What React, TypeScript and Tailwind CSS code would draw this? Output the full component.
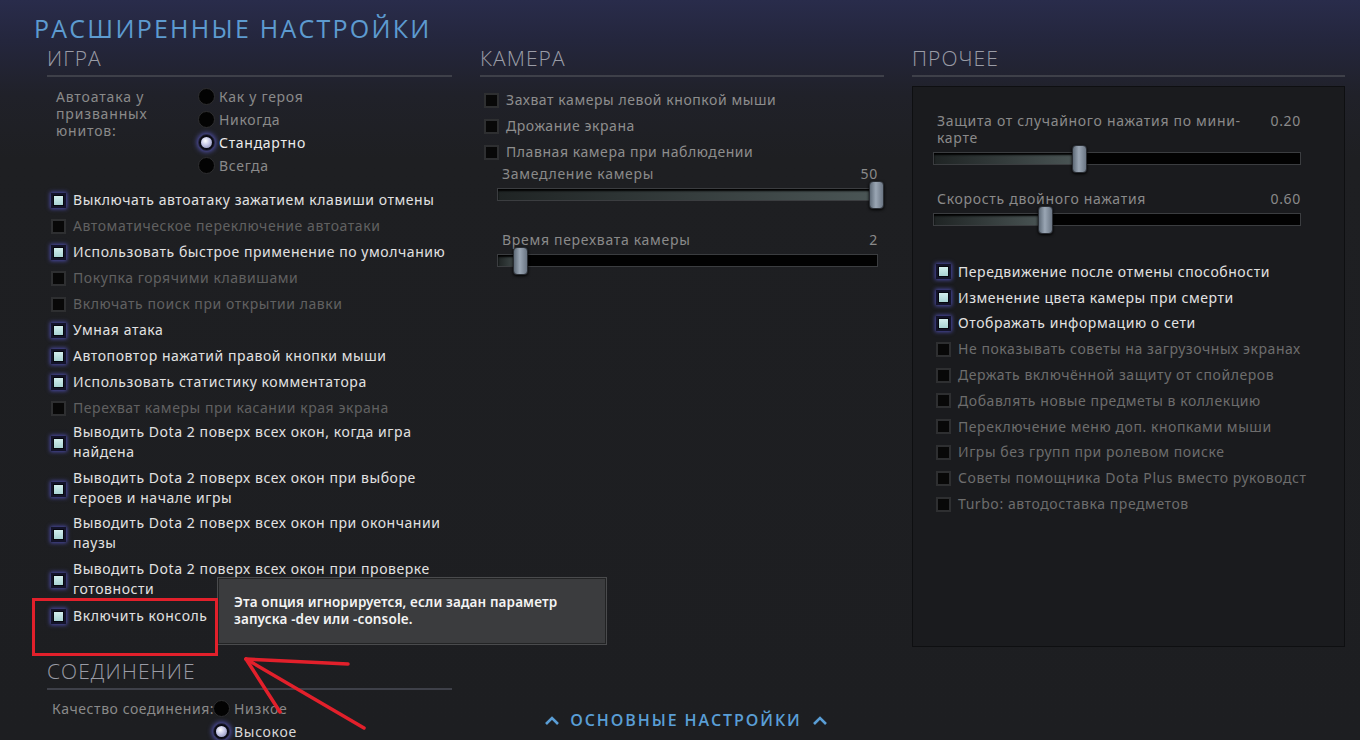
import React from 'react';

const FONT = "font-['Noto_Sans','Open_Sans',sans-serif]";

function Check({ on }: { on?: boolean }) {
  if (on) {
    return (
      <span className="shrink-0 w-[15px] h-[15px] bg-[#07070f] border-[2px] border-[#14142a] shadow-[0_0_4px_1px_#4b4ba6] flex items-center justify-center">
        <span className="w-[9px] h-[9px] bg-[linear-gradient(180deg,#d3eeee,#a9d3d4)]" />
      </span>
    );
  }
  return <span className="shrink-0 w-[15px] h-[15px] bg-[#080808] border-[2px] border-[#2e2f31]" />;
}

function Radio({ on }: { on?: boolean }) {
  if (on) {
    return (
      <span className="shrink-0 w-[17px] h-[17px] rounded-full bg-[#0a0a14] border border-[#2a2a44] shadow-[0_0_5px_1px_#5656b8] flex items-center justify-center">
        <span className="w-[11px] h-[11px] rounded-full bg-[radial-gradient(circle_at_40%_35%,#ffffff,#c4c6e6_45%,#7c80a8)]" />
      </span>
    );
  }
  return <span className="shrink-0 w-[17px] h-[17px] rounded-full bg-[#030303] border border-[#2e2e30]" />;
}

type Row = { label: string; on?: boolean; tone?: 'off' | 'mid' | 'dim' };

function CheckRow({ label, on, tone, h = 'h-[26px]' }: Row & { h?: string }) {
  const color = on
    ? 'text-[#e2e2e2]'
    : tone === 'dim'
      ? 'text-[#8e8e8e]'
      : tone === 'mid'
        ? 'text-[#6d6d6d]'
        : 'text-[#616161]';
  return (
    <div className={`flex items-center gap-[7px] ${h}`}>
      <Check on={on} />
      <span className={`${color} text-[14px] tracking-[0.04em] leading-[20px] whitespace-nowrap`}>{label}</span>
    </div>
  );
}

function Header({ children }: { children: React.ReactNode }) {
  return (
    <div className="border-b-[2px] border-[#3e4049] pb-[4px]">
      <div className="font-['Open_Sans',sans-serif] font-light text-[21px] leading-[26px] tracking-[0.05em] text-[#9a9ca6]">{children}</div>
    </div>
  );
}

function Slider({ label, value, pct, labelClass }: { label: string; value: string; pct: number; labelClass?: string }) {
  return (
    <div>
      <div className="flex items-start justify-between">
        <span className={`text-[14px] tracking-[0.05em] leading-[17px] text-[#8a8a8a] ${labelClass ?? ''}`}>{label}</span>
        <span className="text-[14px] tracking-[0.05em] leading-[17px] text-[#8a8a8a]">{value}</span>
      </div>
      <div className="relative h-[13px] mt-[6px] bg-[#020202] border border-[#3b3d40]">
        <div
          className="h-full bg-[linear-gradient(90deg,#1f2424,#4b5656)] shadow-[inset_0_2px_2px_#000]"
          style={{ width: `${pct}%` }}
        />
        <div
          className="absolute top-[-8px] w-[15px] h-[28px] rounded-[4px] bg-[linear-gradient(90deg,#5f6b78,#9aa6b4_45%,#6b7684)] border border-[#2a2e34] shadow-[0_1px_3px_#000]"
          style={{ left: `calc(${pct}% - 8px)` }}
        />
      </div>
    </div>
  );
}

const gameRows: Row[] = [
  { label: 'Выключать автоатаку зажатием клавиши отмены', on: true },
  { label: 'Автоматическое переключение автоатаки' },
  { label: 'Использовать быстрое применение по умолчанию', on: true },
  { label: 'Покупка горячими клавишами' },
  { label: 'Включать поиск при открытии лавки' },
  { label: 'Умная атака', on: true },
  { label: 'Автоповтор нажатий правой кнопки мыши', on: true },
  { label: 'Использовать статистику комментатора', on: true },
  { label: 'Перехват камеры при касании края экрана' },
];

const topmost = [
  ['Выводить Dota 2 поверх всех окон, когда игра', 'найдена'],
  ['Выводить Dota 2 поверх всех окон при выборе', 'героев и начале игры'],
  ['Выводить Dota 2 поверх всех окон при окончании', 'паузы'],
  ['Выводить Dota 2 поверх всех окон при проверке', 'готовности'],
];

const otherRows: Row[] = [
  { label: 'Передвижение после отмены способности', on: true },
  { label: 'Изменение цвета камеры при смерти', on: true },
  { label: 'Отображать информацию о сети', on: true },
  { label: 'Не показывать советы на загрузочных экранах' },
  { label: 'Держать включённой защиту от спойлеров' },
  { label: 'Добавлять новые предметы в коллекцию' },
  { label: 'Переключение меню доп. кнопками мыши' },
  { label: 'Игры без групп при ролевом поиске' },
  { label: 'Советы помощника Dota Plus вместо руководст' },
  { label: 'Turbo: автодоставка предметов' },
];

export default function App() {
  return (
    <div className={`${FONT} relative w-[1360px] h-[740px] overflow-hidden bg-[linear-gradient(180deg,#292c4b_0px,#24263d_40px,#202129_95px,#1e1f22_160px,#1d1e21_100%)]`}>
      {/* title */}
      <div className="pl-[34px] pt-[14px] font-['Open_Sans',sans-serif] text-[25px] leading-[28px] tracking-[0.09em] text-[#5d9bd0]">
        РАСШИРЕННЫЕ НАСТРОЙКИ
      </div>

      <div className="grid grid-cols-[405px_404px_433px] gap-x-[28px] pl-[47px] mt-[3px]">
        {/* ИГРА */}
        <div>
          <Header>ИГРА</Header>
          <div className="flex mt-[8px]">
            <div className="w-[151px] pl-[9px] pt-[3px] text-[14px] tracking-[0.06em] leading-[17px] text-[#8a8a8a]">
              Автоатака у<br />призванных<br />юнитов:
            </div>
            <div>
              {['Как у героя', 'Никогда', 'Стандартно', 'Всегда'].map((t) => (
                <div key={t} className="flex items-center gap-[4px] h-[23px]">
                  <Radio on={t === 'Стандартно'} />
                  <span className={`text-[14px] tracking-[0.05em] ${t === 'Стандартно' ? 'text-[#ececec]' : 'text-[#8a8a8a]'}`}>{t}</span>
                </div>
              ))}
            </div>
          </div>
          <div className="pl-[4px] mt-[10px]">
            {gameRows.map((r) => (
              <CheckRow key={r.label} {...r} />
            ))}
            {topmost.map(([a, b]) => (
              <div key={a} className="flex items-center gap-[7px] h-[45.5px]">
                <Check on />
                <span className="text-[#e2e2e2] text-[14px] tracking-[0.04em] leading-[20px] whitespace-nowrap -mt-[3px]">
                  {a}
                  <br />
                  {b}
                </span>
              </div>
            ))}
            <CheckRow label="Включить консоль" on />
          </div>

          <div className="mt-[29px]">
            <Header>СОЕДИНЕНИЕ</Header>
            <div className="flex mt-[7px]">
              <div className="w-[166px] pl-[5px] whitespace-nowrap text-[14px] tracking-[0.04em] leading-[23px] text-[#8a8a8a]">Качество соединения:</div>
              <div>
                {['Низкое', 'Высокое'].map((t) => (
                  <div key={t} className="flex items-center gap-[4px] h-[23px]">
                    <Radio on={t === 'Высокое'} />
                    <span className={`text-[14px] tracking-[0.05em] ${t === 'Высокое' ? 'text-[#d8d8d8]' : 'text-[#8a8a8a]'}`}>{t}</span>
                  </div>
                ))}
              </div>
            </div>
          </div>
        </div>

        {/* КАМЕРА */}
        <div>
          <Header>КАМЕРА</Header>
          <div className="pl-[4px] mt-[10px]">
            <CheckRow label="Захват камеры левой кнопкой мыши" tone="dim" />
            <CheckRow label="Дрожание экрана" tone="dim" />
            <CheckRow label="Плавная камера при наблюдении" tone="dim" />
          </div>
          <div className="pl-[17px] pr-[6px]">
            <Slider label="Замедление камеры" value="50" pct={100} labelClass="pl-[5px]" />
            <div className="h-[30px]" />
            <Slider label="Время перехвата камеры" value="2" pct={6} labelClass="pl-[5px]" />
          </div>
        </div>

        {/* ПРОЧЕЕ */}
        <div>
          <Header>ПРОЧЕЕ</Header>
          <div className="mt-[9px] h-[561px] bg-[#1a1b1e] border border-[#0e0f11] pt-[25px]">
            <div className="pl-[20px] pr-[43px]">
              <Slider label={'Защита от случайного нажатия по мини-\nкарте'} value="0.20" pct={40} labelClass="pl-[4px] whitespace-pre-line" />
              <div className="h-[25px]" />
              <Slider label="Скорость двойного нажатия" value="0.60" pct={30.7} labelClass="pl-[4px]" />
            </div>
            <div className="ml-[23px] mt-[33px]">
              {otherRows.map((r) => (
                <CheckRow key={r.label} {...r} tone="mid" h="h-[25.8px]" />
              ))}
            </div>
          </div>
        </div>
      </div>

      {/* tooltip over content */}
      <div className="absolute left-[218px] top-[578px] w-[388px] h-[66px] bg-[#3b3c3e] border border-[#222324] shadow-[0_0_0_1px_#4a4b4d] px-[15px] pt-[15px] font-['Noto_Sans',sans-serif] font-semibold text-[13.5px] tracking-[0.01em] leading-[17px] text-[#f4f4f4]">
        Эта опция игнорируется, если задан параметр
        <br />
        запуска -dev или -console.
      </div>

      {/* red annotation */}
      <div className="absolute left-[32px] top-[598px] w-[186px] h-[58px] border-[3px] border-[#e2202b]" />
      <svg className="absolute left-0 top-0 pointer-events-none" width="1360" height="740">
        <g stroke="#e2202b" strokeWidth="3.5" strokeLinecap="round" fill="none">
          <path d="M246 659 L348 664" />
          <path d="M246 659 L280 712" />
          <path d="M246 659 L364 728" />
        </g>
      </svg>

      {/* footer link */}
      <div className="absolute left-0 right-0 bottom-[8px] flex justify-center pl-[12px]">
        <div className="flex items-center gap-[10px] text-[#5a9ed6]">
          <svg width="16" height="10" viewBox="0 0 16 10">
            <path d="M2 9 L8 3 L14 9" stroke="#5a9ed6" strokeWidth="2.6" fill="none" />
          </svg>
          <span className="font-['Open_Sans',sans-serif] font-semibold text-[16px] tracking-[0.12em]">ОСНОВНЫЕ НАСТРОЙКИ</span>
          <svg width="16" height="10" viewBox="0 0 16 10">
            <path d="M2 9 L8 3 L14 9" stroke="#5a9ed6" strokeWidth="2.6" fill="none" />
          </svg>
        </div>
      </div>
    </div>
  );
}
